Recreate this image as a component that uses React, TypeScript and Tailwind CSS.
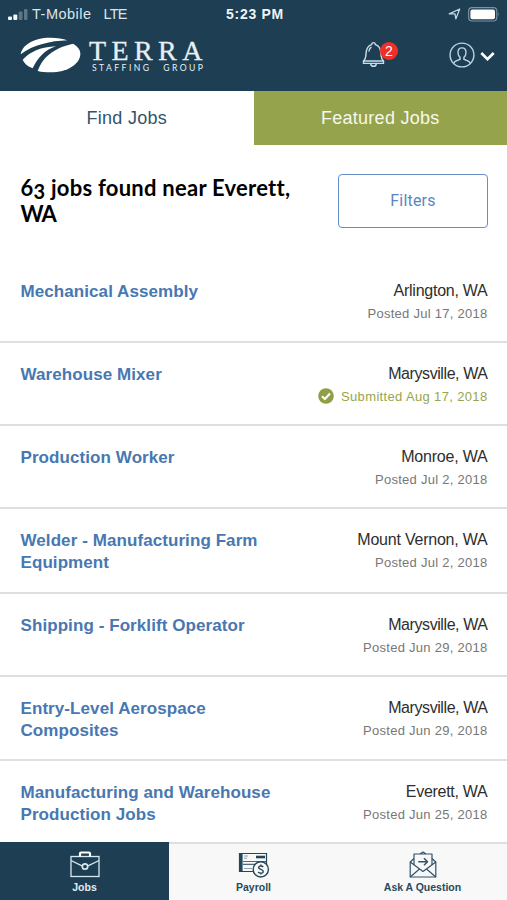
import type { ReactNode } from "react";

interface Job {
  title: string[];
  location: string;
  locationTracking: string;
  date: string;
  submitted?: boolean;
  height: string;
}

const JOBS: Job[] = [
  { title: ["Mechanical Assembly"], location: "Arlington, WA", locationTracking: "tracking-[-0.25px]", date: "Posted Jul 17, 2018", height: "h-[83px]" },
  { title: ["Warehouse Mixer"], location: "Marysville, WA", locationTracking: "tracking-[-0.42px]", date: "Submitted Aug 17, 2018", submitted: true, height: "h-[83px]" },
  { title: ["Production Worker"], location: "Monroe, WA", locationTracking: "tracking-[-0.2px]", date: "Posted Jul 2, 2018", height: "h-[83px]" },
  { title: ["Welder - Manufacturing Farm", "Equipment"], location: "Mount Vernon, WA", locationTracking: "tracking-[-0.22px]", date: "Posted Jul 2, 2018", height: "h-[85px]" },
  { title: ["Shipping - Forklift Operator"], location: "Marysville, WA", locationTracking: "tracking-[-0.42px]", date: "Posted Jun 29, 2018", height: "h-[83px]" },
  { title: ["Entry-Level Aerospace", "Composites"], location: "Marysville, WA", locationTracking: "tracking-[-0.42px]", date: "Posted Jun 29, 2018", height: "h-[84px]" },
  { title: ["Manufacturing and Warehouse", "Production Jobs"], location: "Everett, WA", locationTracking: "tracking-[-0.28px]", date: "Posted Jun 25, 2018", height: "h-[85px]" },
];

function StatusBar() {
  return (
    <div className="grid h-7 grid-cols-3 items-center pl-2 pr-[7px] text-[14px] text-[#dce5e9]">
      <div className="flex items-center whitespace-nowrap">
        <svg width="20" height="13" viewBox="0 0 20 13" fill="#f3f8fa">
          <rect x="0" y="8.5" width="4" height="3.5" rx="1" />
          <rect x="5.3" y="6.5" width="4" height="5.5" rx="1" />
          <rect x="10.7" y="3.5" width="3.8" height="8.5" rx="1" opacity=".3" />
          <rect x="16" y="1" width="3.5" height="11" rx="1" opacity=".3" />
        </svg>
        <span className="ml-1 pt-px text-[14.5px] tracking-[0.5px]">T-Mobile</span>
        <span className="ml-[12px] pt-px text-[14.5px] tracking-[-0.9px]">LTE</span>
      </div>
      <span className="pl-[2px] text-center font-bold tracking-[0.7px] text-[#eef4f6]">5:23 PM</span>
      <div className="flex items-center justify-end gap-[7px]">
        <svg width="13" height="12" viewBox="0 0 13 12" fill="none" stroke="#c6d6df" strokeWidth="1.3" strokeLinejoin="round">
          <path d="M1.2 5.8 11.7 1 7.9 10.8 7 5.9Z" />
        </svg>
        <svg width="32" height="15" viewBox="0 0 32 15">
          <rect x=".6" y=".6" width="28.2" height="13.4" rx="3.5" fill="none" stroke="#7892a0" strokeWidth="1.2" />
          <rect x="2.4" y="2.4" width="24.6" height="9.8" rx="2" fill="#fff" />
          <path d="M30.2 5q1.6 2.4 0 4.8Z" fill="#7892a0" />
        </svg>
      </div>
    </div>
  );
}

function Logo() {
  return (
    <div className="flex items-start">
      <svg width="61" height="36" viewBox="59 111 183 108" fill="#fff">
        <path d="M61 163C65 134 104 112 151 113C171 113 188 116 201 121C151 123 99 134 61 163Z" />
        <path d="M67 179C91 154 122 141 167 139C135 149 112 173 97 205C82 199 71 190 67 179Z" />
        <path d="M112 213C126 173 157 145 218 131C231 138 240 149 240 161C240 191 202 217 150 217C136 217 124 216 112 213Z" />
      </svg>
      <div className="ml-[8px] whitespace-nowrap text-[#e8f0f2]">
        <div className="h-[27px] font-['Liberation_Serif',serif] text-[28px] leading-[27px] tracking-[5.4px] [-webkit-text-stroke:0.3px_#e8f0f2]">TERRA</div>
        <div className="ml-[3px] font-[Lato,sans-serif] text-[8.6px] leading-[9px] tracking-[2.45px] [word-spacing:7px]">STAFFING GROUP</div>
      </div>
    </div>
  );
}

function Header() {
  return (
    <header className="h-[91px] shrink-0 bg-[#1d3e53]">
      <StatusBar />
      <div className="flex h-[54px] items-start justify-between pl-5 pr-3 pt-[9px]">
        <Logo />
        <div className="mt-[4px] flex items-center">
          <div className="relative mr-[64px]">
            <svg width="23" height="27" viewBox="0 0 23 27" fill="none" stroke="#c9dde8" strokeWidth="1.4" strokeLinecap="round" strokeLinejoin="round">
              <path d="M9.7 3.6C9.7 1 13.3 1 13.3 3.6C17.6 4.6 18.6 8.1 18.9 12.1C19.1 15.7 19.4 18.3 21.5 20V22.4H1.5V20C3.6 18.3 3.9 15.7 4.1 12.1C4.4 8.1 5.4 4.6 9.7 3.6Z" />
              <path d="M1.5 20H21.5M8.7 22.6C8.9 26.2 14.1 26.2 14.3 22.6M7 10C7.3 8 8 7 9.1 6.4" />
            </svg>
            <span className="absolute left-[18px] top-px flex size-[18px] items-center justify-center rounded-full bg-[#ee3028] text-[14px] leading-none text-white">2</span>
          </div>
          <svg width="26" height="26" viewBox="0 0 26 26" fill="none" stroke="#bdd3e1" strokeWidth="1.4">
            <circle cx="13" cy="13" r="11.9" />
            <path d="M9 10.6C9 4.3 17 4.3 17 10.6C17 13.2 15.9 14.7 14.9 15.4V17.2L19.2 19.1Q20.8 19.8 21.2 21.4M9 10.6C9 13.2 10.1 14.7 11.1 15.4V17.2L6.8 19.1Q5.2 19.8 4.8 21.4" />
          </svg>
          <svg className="ml-[5px] mt-[3px]" width="15" height="11" viewBox="0 0 15 11" fill="none" stroke="#fff" strokeWidth="2.7">
            <path d="M1.3 2 7.5 8.2 13.7 2" />
          </svg>
        </div>
      </div>
    </header>
  );
}

function JobRow({ job }: { job: Job }) {
  return (
    <li className={`${job.height} flex shrink-0 justify-between border-b-2 border-[#dedfe0] pl-[20.5px] pr-[19.5px] pt-[21px]`}>
      <h2 className="whitespace-nowrap text-[17px] font-bold leading-[22px] tracking-[0.08px] text-[#4778b1]">
        {job.title.map((line) => (
          <span key={line} className="block">{line}</span>
        ))}
      </h2>
      <div className="whitespace-nowrap text-right">
        <div className={`${job.locationTracking} text-[16px] leading-[20px] text-[#2e2e2e]`}>{job.location}</div>
        <div className={`mt-[3px] flex items-center justify-end text-[13px] leading-5 ${job.submitted ? "tracking-[0.35px] text-[#96a64a]" : "tracking-[0.27px] text-[#777]"}`}>
          {job.submitted && (
            <svg className="mb-[2px] mr-[7px]" width="16" height="16" viewBox="0 0 16 16">
              <circle cx="8" cy="8" r="7.8" fill="#8f9f44" />
              <path d="M4 8.2 6.9 11 12 5.5" fill="none" stroke="#fff" strokeWidth="2.1" />
            </svg>
          )}
          {job.date}
        </div>
      </div>
    </li>
  );
}

function BriefcaseIcon() {
  return (
    <svg width="30" height="27" viewBox="0 0 30 27" fill="none" stroke="#d7e9f0" strokeWidth="1.3">
      <rect x="1" y="5.5" width="28" height="20" />
      <path d="M10 5.5V2.7Q10 1.5 11.2 1.5H18.8Q20 1.5 20 2.7V5.5" strokeWidth="2.2" stroke="#fff" />
      <path d="M1 9.5 12 14.8M29 9.5 18 14.8" />
      <circle cx="15" cy="15.5" r="2.7" strokeWidth="1.7" />
    </svg>
  );
}

function PayrollIcon() {
  return (
    <svg width="32" height="27" viewBox="0 0 32 27" fill="none" stroke="#24465b" strokeWidth="1.2">
      <path d="M1.5 2.5H28.5V20.5H1.5Z" />
      <path d="M2.9 2.5V20.5" strokeWidth="3.4" />
      <path d="M6 5H10M6 7.2H9M6 17.5H14" strokeWidth=".8" opacity=".6" />
      <path d="M18 6H27" strokeWidth="2.6" />
      <path d="M5 10.5H28M5 13.3H18" strokeWidth="1.2" opacity=".8" />
      <circle cx="22.8" cy="18.4" r="7.6" fill="#f8f8f8" strokeWidth="1.4" />
      <path d="M25.2 16C24 14.4 20.6 14.6 20.6 16.6C20.6 18.8 25.3 18 25.3 20.4C25.3 22.6 21.5 22.6 20.2 21M22.9 13.4V15M22.9 22V23.6" strokeWidth="1.4" />
    </svg>
  );
}

function EnvelopeIcon() {
  return (
    <svg width="28" height="27" viewBox="0 0 28 27" fill="none" stroke="#31526a" strokeWidth="1.2" strokeLinejoin="round">
      <path d="M5 7.5 1.2 11V26H26.8V11L23 7.5" />
      <path d="M5 14V3H23V14M11 3 14 1 17 3" />
      <path d="M1.2 11 14 20.5 26.8 11M1.2 26 10.5 18M26.8 26 17.5 18" />
      <path d="M9.3 10.7H18.5M15 7.2 18.5 10.7 15 14.2" strokeWidth="1.5" />
    </svg>
  );
}

function NavItem({ label, active, children }: { label: string; active?: boolean; children: ReactNode }) {
  return (
    <button
      type="button"
      className={`flex flex-col items-center whitespace-nowrap text-[10.5px] font-bold ${
        active ? "bg-[#1d3e53] pt-[9px] text-[#e2edf1]" : "border-t-2 border-[#dedfe0] bg-[#f8f8f8] pt-[7px] text-[#294a5e]"
      }`}
    >
      {children}
      <span className="mt-[3px] leading-[13px]">{label}</span>
    </button>
  );
}

export default function App() {
  return (
    <div className="flex h-[900px] w-[507px] flex-col overflow-hidden bg-white font-['Liberation_Sans',Arial,sans-serif]">
      <Header />
      <div className="grid h-[54px] shrink-0 grid-cols-2 text-[18px] tracking-[0.27px]">
        <button type="button" className="text-[#31546a]">Find Jobs</button>
        <button type="button" className="bg-[#95a34c] text-[#f7f8ed]">Featured Jobs</button>
      </div>
      <section className="flex h-[115px] shrink-0 items-start justify-between pl-[20.5px] pr-[19px] pt-[29px]">
        <h1 className="mt-px whitespace-nowrap font-[Lato,sans-serif] text-[22px] font-bold leading-[26px] tracking-[0.25px] text-black">
          6<span className="align-[-3px] text-[20px] leading-none">3</span> jobs found near Everett,
          <span className="block tracking-[-1px]">WA</span>
        </h1>
        <button type="button" className="h-[54px] w-[150px] rounded-[4px] border-[1.5px] border-[#658fc5] font-[Roboto,sans-serif] text-[16px] tracking-[0.2px] text-[#5d86bd]">
          Filters
        </button>
      </section>
      <ul className="flex min-h-0 flex-1 flex-col overflow-hidden">
        {JOBS.map((job) => (
          <JobRow key={job.title[0]} job={job} />
        ))}
      </ul>
      <nav className="grid h-[58px] shrink-0 grid-cols-3">
        <NavItem label="Jobs" active><BriefcaseIcon /></NavItem>
        <NavItem label="Payroll"><PayrollIcon /></NavItem>
        <NavItem label="Ask A Question"><EnvelopeIcon /></NavItem>
      </nav>
    </div>
  );
}
